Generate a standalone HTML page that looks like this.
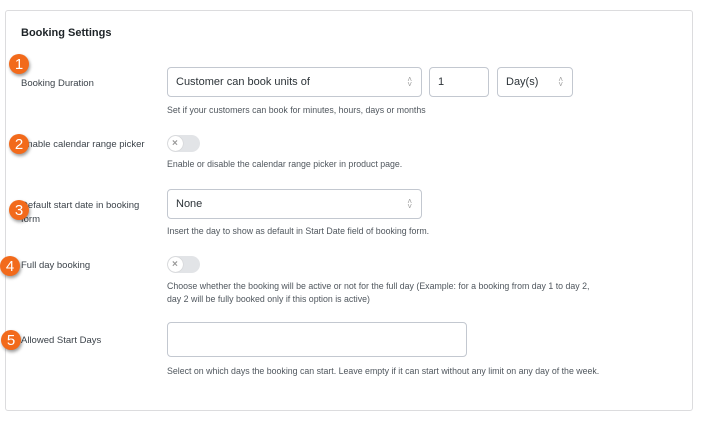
<!DOCTYPE html>
<html><head><style>
body{margin:0;width:702px;height:421px;background:#fff;font-family:"Liberation Sans",sans-serif;position:relative;overflow:hidden}
.box{position:absolute;left:5px;top:10px;width:686px;height:399px;border:1px solid #dcdcde;border-radius:3px;background:#fff}
.a{position:absolute;white-space:nowrap}
.t{font-size:11px;color:#1d2327;font-weight:bold;}
.l{font-size:9.5px;color:#3c434a}
.d{font-size:8.8px;color:#50575e}
.in{position:absolute;border:1px solid #c3c8d0;border-radius:4px;background:#fff;font-size:11px;color:#2c3338;box-sizing:border-box;padding-left:8px;display:flex;align-items:center}
.ar{position:absolute;right:9px;top:50%;transform:translateY(-50%);font-size:8px;color:#999;line-height:5px;text-align:center}
.tg{position:absolute;width:33px;height:17px;border-radius:9px;background:#e2e4e7}
.tg:before{content:"";position:absolute;left:1px;top:1px;width:15px;height:15px;border-radius:50%;background:#fff;box-shadow:0 0 1px #aaa}
.tg:after{content:"×";position:absolute;left:5px;top:3px;font-size:10px;line-height:11px;color:#999;font-weight:bold}
.n{position:absolute;width:20px;height:20px;border-radius:50%;background:#f26a1b;color:#fff;font-size:15px;text-align:center;line-height:21px;box-shadow:1px 2px 3px rgba(0,0,0,.4)}
</style></head><body>
<div class="box"></div>
<div class="a t" style="left:21px;top:27px">Booking Settings</div>

<div class="a l" style="left:21px;top:78px">Booking Duration</div>
<div class="in" style="left:167px;top:67px;width:255px;height:30px">Customer can book units of<span class="ar">˄<br>˅</span></div>
<div class="in" style="left:429px;top:67px;width:60px;height:30px">1</div>
<div class="in" style="left:497px;top:67px;width:76px;height:30px">Day(s)<span class="ar">˄<br>˅</span></div>
<div class="a d" style="left:167px;top:105px">Set if your customers can book for minutes, hours, days or months</div>

<div class="a l" style="left:21px;top:139px">Enable calendar range picker</div>
<div class="tg" style="left:167px;top:135px"></div>
<div class="a d" style="left:167px;top:159px">Enable or disable the calendar range picker in product page.</div>

<div class="a l" style="left:21px;top:199px;line-height:14px">Default start date in booking<br>form</div>
<div class="in" style="left:167px;top:189px;width:255px;height:30px">None<span class="ar">˄<br>˅</span></div>
<div class="a d" style="left:167px;top:226px">Insert the day to show as default in Start Date field of booking form.</div>

<div class="a l" style="left:21px;top:260px">Full day booking</div>
<div class="tg" style="left:167px;top:256px"></div>
<div class="a d" style="left:167px;top:280px;line-height:13px">Choose whether the booking will be active or not for the full day (Example: for a booking from day 1 to day 2,<br>day 2 will be fully booked only if this option is active)</div>

<div class="a l" style="left:21px;top:335px">Allowed Start Days</div>
<div class="in" style="left:167px;top:322px;width:300px;height:35px"></div>
<div class="a d" style="left:167px;top:366px">Select on which days the booking can start. Leave empty if it can start without any limit on any day of the week.</div>

<div class="n" style="left:9px;top:54px">1</div>
<div class="n" style="left:9px;top:134px">2</div>
<div class="n" style="left:9px;top:200px">3</div>
<div class="n" style="left:0px;top:256px">4</div>
<div class="n" style="left:1px;top:330px">5</div>
</body></html>
